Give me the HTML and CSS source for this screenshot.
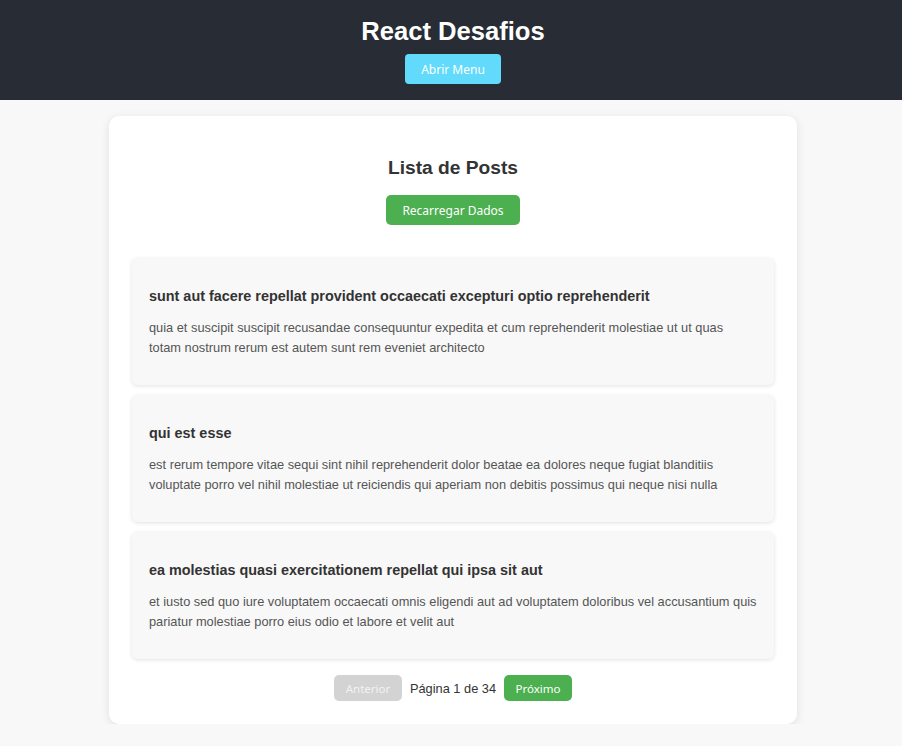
FILE: index.html
```html
<!DOCTYPE html>
<html lang="pt">
<head>
<meta charset="utf-8">
<title>React Desafios</title>
<link rel="stylesheet" href="styles.css">
</head>
<body>
<header class="app-header">
  <h1 class="app-title">React Desafios</h1>
  <button class="btn btn-menu">Abrir Menu</button>
</header>
<main class="panel">
  <h2 class="panel-title">Lista de Posts</h2>
  <div class="reload-row"><button class="btn btn-green">Recarregar Dados</button></div>
  <div class="post-list">
    <article class="post">
      <h3 class="post-title">sunt aut facere repellat provident occaecati excepturi optio reprehenderit</h3>
      <p class="post-body">quia et suscipit suscipit recusandae consequuntur expedita et cum reprehenderit molestiae ut ut quas totam nostrum rerum est autem sunt rem eveniet architecto</p>
    </article>
    <article class="post">
      <h3 class="post-title">qui est esse</h3>
      <p class="post-body">est rerum tempore vitae sequi sint nihil reprehenderit dolor beatae ea dolores neque fugiat blanditiis voluptate porro vel nihil molestiae ut reiciendis qui aperiam non debitis possimus qui neque nisi nulla</p>
    </article>
    <article class="post">
      <h3 class="post-title">ea molestias quasi exercitationem repellat qui ipsa sit aut</h3>
      <p class="post-body">et iusto sed quo iure voluptatem occaecati omnis eligendi aut ad voluptatem doloribus vel accusantium quis pariatur molestiae porro eius odio et labore et velit aut</p>
    </article>
  </div>
  <nav class="pager">
    <button class="btn btn-pager btn-disabled" disabled>Anterior</button>
    <span class="pager-info">Página 1 de 34</span>
    <button class="btn btn-pager btn-green">Próximo</button>
  </nav>
</main>
</body>
</html>
```

FILE: styles.css
```css
* { box-sizing: border-box; }
body {
  margin: 0;
  background: #f8f8f8;
  font-family: "Liberation Sans", Arial, sans-serif;
  color: #333;
}
.app-header {
  background: #282c34;
  padding: 16px 0 16px 4px;
  display: flex;
  flex-direction: column;
  align-items: center;
}
.app-title {
  margin: 0 0 8px;
  font-size: 25.6px;
  line-height: 30px;
  color: #fff;
  font-weight: bold;
}
.btn {
  font-family: "Noto Sans", "Open Sans", sans-serif;
  font-size: 12px;
  border: none;
  color: #fff;
  cursor: pointer;
}
.btn-menu {
  background: #61dafb;
  height: 30px;
  width: 96px;
  border-radius: 4px;
  padding: 0;
}
.panel {
  width: 688px;
  margin: 16px 0 0 calc(50% - 342px);
  background: #fff;
  border-radius: 10px;
  box-shadow: 0 2px 10px rgba(0,0,0,0.1);
  padding: 24px 23px 23px;
}
.panel-title {
  text-align: center;
  font-size: 19.2px;
  line-height: 24px;
  margin: 16px 0 15px;
  color: #333;
}
.reload-row {
  display: flex;
  justify-content: center;
}
.btn-green {
  background: #4caf50;
  border-radius: 5px;
}
.reload-row .btn-green {
  height: 30px;
  width: 134px;
  padding: 0;
}
.post-list {
  margin-top: 33px;
  display: flex;
  flex-direction: column;
  gap: 10px;
}
.post {
  background: #f8f8f8;
  border-radius: 6px;
  box-shadow: 0 1px 4px rgba(0,0,0,0.12);
  padding: 16px 17px;
  height: 127px;
}
.post-title {
  margin: 13px 0 13px;
  font-size: 14.4px;
  line-height: 18px;
  color: #333;
}
.post-body {
  margin: 0;
  font-size: 12.8px;
  line-height: 20px;
  color: #555;
}
.pager {
  margin-top: 16px;
  display: flex;
  justify-content: center;
  align-items: center;
  gap: 8px;
}
.btn-pager {
  height: 26px;
  width: 68px;
  padding: 0;
  border-radius: 5px;
  font-size: 11.5px;
}
.btn-disabled {
  background: #d3d3d3;
  color: #f2f2f2;
  cursor: default;
}
.pager-info {
  font-size: 12.8px;
  color: #333;
}
```
